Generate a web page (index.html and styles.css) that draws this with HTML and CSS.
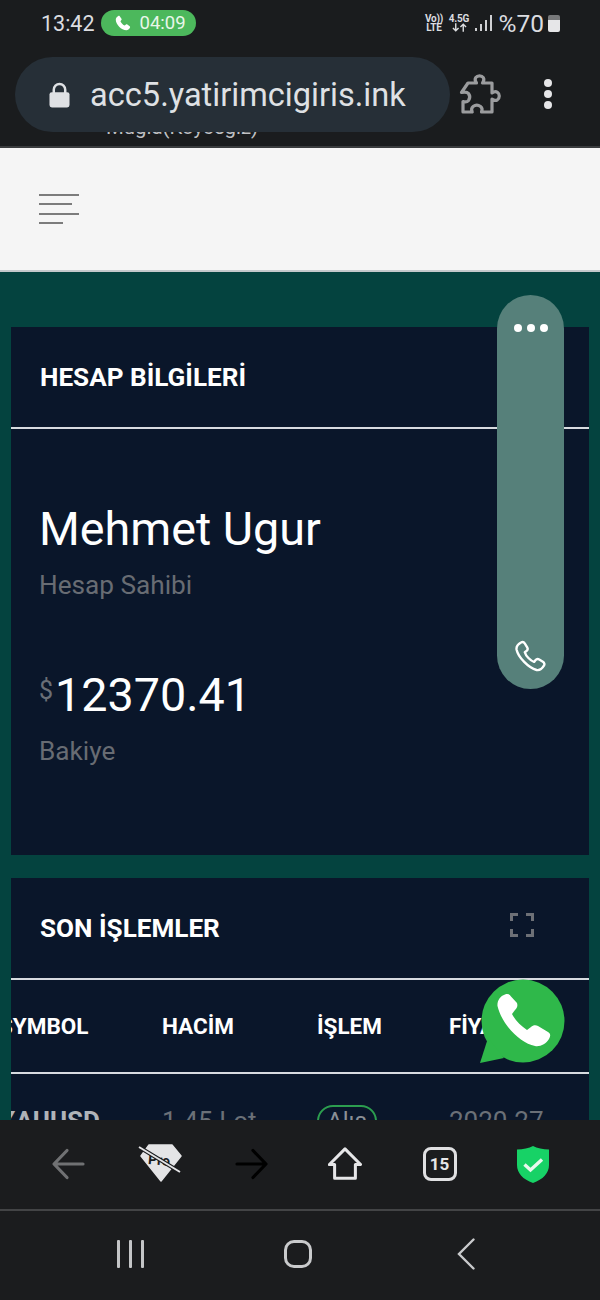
FILE: index.html
```html
<!DOCTYPE html>
<html lang="tr">
<head>
<meta charset="utf-8">
<title>Hesap Bilgileri</title>
<link rel="stylesheet" href="styles.css">
</head>
<body>
<div class="screen">
  <header class="chrome">
    <div class="status">
      <div class="status-left">
        <span class="clock">13:42</span>
        <span class="call">
          <svg class="call-icon" viewBox="0 0 24 24"><path d="M6.6 2.5c.6-.4 1.4-.3 1.900.3l2.200 3.100c.4.600.4 1.300-.1 1.800L9.400 9c.8 2 3.200 4.600 5.500 5.600l1.400-1.300c.5-.5 1.200-.5 1.800-.1l3 2.200c.6.500.7 1.300.3 1.900-1 1.700-2.600 3.200-4.400 3.200C10.500 20.500 3.500 13.200 3.500 6.900c0-1.800 1.400-3.400 3.100-4.400z"/></svg>
          04:09
        </span>
      </div>
      <div class="status-right">
        <span class="net"><span>Vo))</span><span>LTE</span></span>
        <span class="net net-data"><span>4.5G</span><svg class="arrows" viewBox="0 0 16 9"><path d="M4 0v8M1 5l3 3 3-3M12 9V1M9 4l3-3 3 3" fill="none" stroke="#dcdde0" stroke-width="1.500"/></svg></span>
        <span class="signal"><i class="s1"></i><i class="s2"></i><i class="s3"></i><i class="s4"></i></span>
        <span class="pct">%70</span>
        <span class="battery"></span>
      </div>
    </div>
    <div class="urlrow">
      <span class="behind">Muğla(Köyceğiz)</span>
      <div class="pill">
        <svg class="lock" viewBox="0 0 22 26"><path d="M5 11V7.500a6 6 0 0 1 12 0V11" fill="none" stroke="#dfe1e4" stroke-width="2.600"/><rect x="0.500" y="10" width="21" height="16" rx="2.500" fill="#dfe1e4"/></svg>
        <span class="url">acc5.yatirimcigiris.ink</span>
      </div>
      <svg class="puzzle" viewBox="0 0 44 44"><path d="M9 11h8.500c-1.500-2-1.800-3.700-.8-5.300 1.700-2.500 6-2.500 7.600 0 1 1.600.7 3.300-.8 5.300H33v10c2-1.400 3.800-1.700 5.400-.7 2.500 1.700 2.500 5.800 0 7.500-1.600 1-3.400.7-5.400-.7V40H22.500c1-2.400.7-4.300-.9-5.500-2.300-1.600-5.300-1.600-7.500 0-1.600 1.200-1.900 3.100-.9 5.500H4V29.500c2.300.8 4.200.5 5.500-1 1.500-2.100 1.500-4.900 0-7-1.300-1.500-3.200-1.800-7-1z" fill="none" stroke="#9b9c9e" stroke-width="3.200" stroke-linejoin="round"/></svg>
      <span class="kebab"><i></i><i></i><i></i></span>
    </div>
  </header>

  <div class="topbar">
    <span class="menu"><i class="m40"></i><i class="m33"></i><i class="m40"></i><i class="m24"></i></span>
  </div>

  <main class="page">
    <section class="card info">
      <div class="card-head"><h2>HESAP BİLGİLERİ</h2></div>
      <div class="info-body">
        <div class="name">Mehmet Ugur</div>
        <div class="muted">Hesap Sahibi</div>
        <div class="balance"><sup>$</sup>12370.41</div>
        <div class="muted">Bakiye</div>
      </div>
    </section>

    <section class="card trades">
      <div class="card-head split">
        <h2>SON İŞLEMLER</h2>
        <svg class="expand" viewBox="0 0 24 24"><path d="M1.500 8V1.500H8M16 1.500h6.500V8M22.500 16v6.500H16M8 22.500H1.500V16" fill="none" stroke="#6d7076" stroke-width="3"/></svg>
      </div>
      <div class="thead">
        <span class="c1">SYMBOL</span><span class="c2">HACİM</span><span class="c3">İŞLEM</span><span class="c4">FİYAT</span>
      </div>
      <div class="trow">
        <span class="c1 sym">XAUUSD</span><span class="c2">1.45 Lot</span><span class="c3"><b class="tag">Alış</b></span><span class="c4">2020.27</span>
      </div>
    </section>

    <div class="widget">
      <span class="dots"><i></i><i></i><i></i></span>
      <svg class="widget-phone" viewBox="0 0 34 34"><path d="M7 2.500c1.500-.9 3-.3 3.900 1.100l2.300 3.700c.8 1.400.5 2.800-.7 3.700l-1.700 1.300c1 3.700 5.600 8.400 9.300 9.600l1.500-1.800c.9-1.100 2.300-1.400 3.600-.6l3.700 2.300c1.400.9 2 2.500 1 3.900-1.500 2.500-3.900 5-7.300 4.300C14.500 27.900 4.300 17.300 2.600 9.700 2 6.500 4.500 3.900 7 2.500z" fill="none" stroke="#fff" stroke-width="2.400" stroke-linejoin="round"/></svg>
    </div>

    <svg class="whatsapp" viewBox="0 0 85 85"><circle cx="43" cy="42" r="41.500" fill="#2fb84a"/><path d="M0 84l8-25 16 20z" fill="#2fb84a"/><path d="M17.500 27C17 22 20 17 25 15.500c3-1 5 0 6 2l6 6.500c1 3 0 5-2 7l-3 4c3 6 9 12 15 16l4-3c2-2 5-2 7-1l10 6c3 2 2.500 4 1 7-3 5-9 8-14 7C40 64 22 46 17.500 27z" fill="#fff"/></svg>
  </main>

  <div class="browserbar">
    <svg class="b-icon" viewBox="0 0 34 34"><path d="M32 17H4M16 3.500 3 17l13 13.500" fill="none" stroke="#707173" stroke-width="3.200" stroke-linecap="round" stroke-linejoin="round"/></svg>
    <svg class="pro" viewBox="0 0 46 40"><path d="M11 1h23l9 11-20 25L3 12z" fill="#e4e4e6" stroke="#e4e4e6" stroke-width="1.500" stroke-linejoin="round"/><text x="10" y="21" class="pro-text" transform="rotate(5 22 18)">Pro</text><path d="M1 3l41 25" stroke="#1b1c1e" stroke-width="4"/><path d="M1 3l41 25" stroke="#e4e4e6" stroke-width="2"/></svg>
    <svg class="b-icon nudge" viewBox="0 0 34 34"><path d="M2 17h28M18 3.500 31 17 18 30.500" fill="none" stroke="#000" stroke-width="3.200" stroke-linecap="round" stroke-linejoin="round"/></svg>
    <svg class="b-icon nudge" viewBox="0 0 36 36"><path d="M7 33V18.500H1.500L18 2 34.500 18.500H29V33z" fill="none" stroke="#e6e6e8" stroke-width="3.200" stroke-linejoin="round"/></svg>
    <span class="tabs">15</span>
    <svg class="shield" viewBox="0 0 34 38"><path d="M17 1c4 2.300 10 3.500 16 3.500V20c0 8-6 14.500-16 18C7 34.500 1 28 1 20V4.500C7 4.500 13 3.300 17 1z" fill="#17d266"/><path d="M8.500 19.500l6 5.500L26 14.500" fill="none" stroke="#e8f8ee" stroke-width="3.400"/></svg>
  </div>

  <nav class="sysnav">
    <span class="recent"><i></i><i></i><i></i></span>
    <span class="home"></span>
    <svg class="backnav" viewBox="0 0 18 32"><path d="M16.500 1.500 2 16l14.500 14.500" fill="none" stroke="#c9cacc" stroke-width="2.400" stroke-linecap="round"/></svg>
  </nav>
</div>
</body>
</html>
```
FILE: styles.css
```css
* { box-sizing: border-box; }
html, body { margin: 0; padding: 0; }
body { font-family: Roboto, "Liberation Sans", sans-serif; background: #1a1c1e; }
i { display: block; }
.screen { width: 600px; height: 1300px; display: flex; flex-direction: column; overflow: hidden; }

.chrome { height: 148px; flex: none; background: #1a1c1e; border-bottom: 2px solid #3a3c3e; }
.status { height: 46px; display: flex; justify-content: space-between; align-items: center; padding: 0 40px 0 41px; }
.status-left { display: flex; align-items: center; gap: 6px; }
.clock { font-size: 21.5px; color: #dcdde0; }
.call { display: flex; align-items: center; gap: 8px; height: 26px; width: 95px; padding-left: 12px; border-radius: 13px; background: #4cb85c; color: #e8f6ea; font-size: 18.5px; }
.call-icon { width: 19px; height: 19px; fill: #fff; }
.status-right { display: flex; align-items: center; color: #dcdde0; }
.net { display: flex; flex-direction: column; align-items: center; font-size: 10px; font-weight: 700; line-height: 9px; width: 17px; margin-right: 6px; letter-spacing: -.2px; white-space: nowrap; }
.net-data { width: 21px; margin-right: 5px; }
.arrows { width: 15px; height: 9px; }
.signal { display: flex; align-items: flex-end; gap: 3px; height: 16px; margin-right: 7px; }
.signal i { width: 2px; background: #cfd0d3; }
.s1 { height: 3px; } .s2 { height: 7px; } .s3 { height: 11px; } .s4 { height: 16px; }
.pct { font-size: 24.5px; margin-right: 4px; }
.battery { width: 12px; height: 17px; border-radius: 2px; background: linear-gradient(#77787a 0 5px, #e6e6e8 5px); }

.urlrow { position: relative; height: 100px; display: flex; align-items: flex-start; padding: 11px 0 0 15px; }
.behind { position: absolute; left: 106px; top: 70px; font-size: 20.4px; line-height: 23px; color: #bfc0c3; }
.pill { position: relative; width: 435px; height: 75px; border-radius: 38px; background: #262f37; display: flex; align-items: center; padding-left: 34px; }
.lock { width: 21px; height: 26px; margin-right: 20px; }
.url { font-size: 32.6px; color: #dfe1e4; white-space: nowrap; }
.puzzle { width: 44px; height: 44px; margin: 15px 0 0 9px; }
.kebab { display: flex; flex-direction: column; gap: 3px; margin: 22px 0 0 41px; }
.kebab i { width: 8px; height: 8px; border-radius: 50%; background: #e6e6e8; }

.topbar { height: 124px; flex: none; background: #f5f5f5; border-bottom: 2px solid #c4c9cb; display: flex; align-items: center; padding: 0 0 0 39px; }
.menu { display: flex; flex-direction: column; gap: 7.3px; }
.menu i { height: 2px; background: #7c7c7c; }
.m40 { width: 40px; } .m33 { width: 33px; } .m24 { width: 24px; }

.page { position: relative; flex: 1; min-height: 0; background: #04433f; overflow: hidden; padding: 55px 11px 0; display: flex; flex-direction: column; gap: 23px; }
.card { background: #0a162a; color: #fff; flex: none; overflow: hidden; }
.card-head { height: 102px; border-bottom: 2px solid #d8dbe0; display: flex; align-items: center; padding: 0 29px; }
.card-head.split { justify-content: space-between; padding-right: 55px; }
h2 { margin: 0; font-size: 26.1px; font-weight: 700; }
.info { height: 528px; }
.info-body { padding: 70px 29px 0 28px; }
.name { font-size: 46.7px; line-height: 60px; }
.muted { font-size: 26.2px; line-height: 30px; color: #686c73; margin-top: 11px; }
.balance { font-size: 46.7px; line-height: 60px; margin-top: 65px; }
.balance sup { font-size: 25px; color: #6a6f77; vertical-align: 12px; line-height: 0; margin-right: 2px; }
.expand { width: 24px; height: 24px; margin-bottom: 6px; }
.thead, .trow { display: flex; align-items: center; margin-left: -12px; white-space: nowrap; }
.thead { height: 94px; border-bottom: 2px solid #d8dbe0; font-size: 22.5px; font-weight: 700; width: 590px; }
.trow { height: 94px; font-size: 26px; color: #6b7077; }
.sym { font-weight: 700; color: #b0b3b8; }
.c1 { width: 163px; flex: none; }
.c2 { width: 155px; flex: none; }
.c3 { width: 132px; flex: none; }
.c4 { flex: none; }
.tag { display: inline-block; width: 60px; text-align: center; border: 2px solid #2c9e4f; border-radius: 20px; font-weight: 400; font-size: 24px; line-height: 28px; color: #8a8f96; }

.widget { position: absolute; left: 497px; top: 23px; width: 67px; height: 394px; border-radius: 34px; background: #56807a; display: flex; flex-direction: column; align-items: center; justify-content: space-between; padding: 29px 0 15px; }
.dots { display: flex; gap: 5px; }
.dots i { width: 8px; height: 8px; border-radius: 50%; background: #fff; }
.widget-phone { width: 34px; height: 34px; }
.whatsapp { position: absolute; left: 480px; top: 707px; width: 85px; height: 85px; }

.browserbar { position: relative; z-index: 1; height: 91px; flex: none; background: #1b1c1e; border-bottom: 2px solid #434446; display: grid; grid-template-columns: repeat(6, 93px); justify-items: center; align-items: center; padding: 0 0 2px 21px; }
.b-icon { width: 34px; height: 34px; }
.nudge { margin-right: 4px; }
.pro { width: 46px; height: 40px; }
.pro-text { font: 700 14px Roboto, sans-serif; fill: #1b1c1e; }
.tabs { width: 34px; height: 34px; border: 3px solid #e0e0e2; border-radius: 8px; color: #e6e6e8; font-size: 17px; font-weight: 700; display: flex; align-items: center; justify-content: center; }
.shield { width: 34px; height: 38px; }
.sysnav { position: relative; z-index: 1; flex: none; height: 89px; background: #1b1c1e; display: grid; grid-template-columns: repeat(3, 168px); justify-items: center; align-items: center; padding: 0 0 4px 46px; }
.recent { display: flex; gap: 9px; }
.recent i { width: 3px; height: 28px; background: #c4c5c7; border-radius: 1px; }
.home { width: 28px; height: 28px; border: 3px solid #c9cacc; border-radius: 10px; }
.backnav { width: 18px; height: 32px; }
```
